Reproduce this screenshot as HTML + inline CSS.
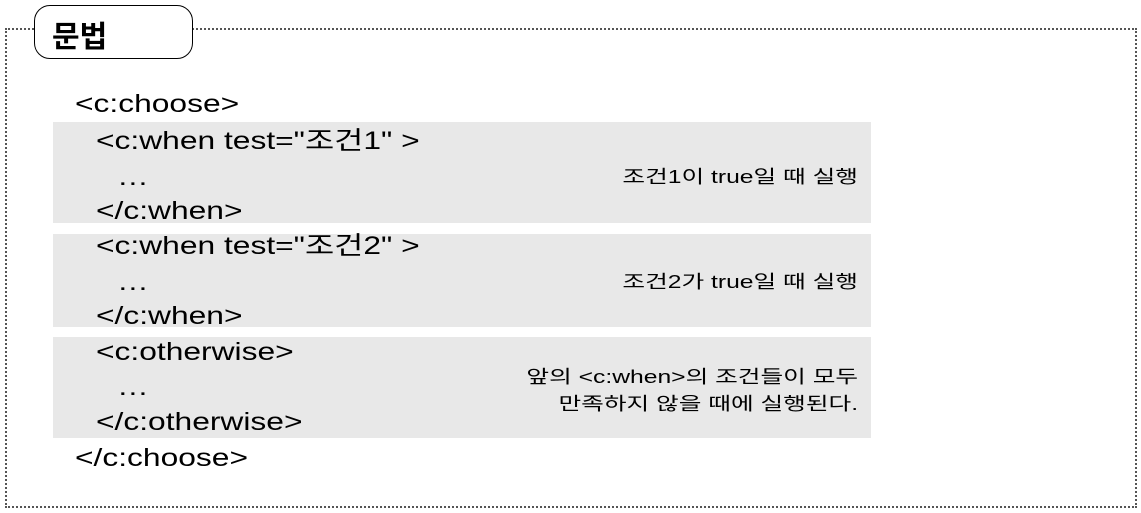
<!DOCTYPE html>
<html><head><meta charset="utf-8"><style>
body{margin:0;width:1141px;height:513px;background:#fff;position:relative;overflow:hidden;font-family:"Liberation Sans","Noto Sans CJK KR",sans-serif;color:#000}
.frame{position:absolute;left:5px;top:28px;width:1128px;height:476px;border:2px dotted #555}
.title{position:absolute;left:34px;top:5px;width:157px;height:52px;border:1.5px solid #000;border-radius:16px;background:#fff}
.title span{position:absolute;left:17px;top:6px;font-size:30px;font-weight:bold;font-family:"Noto Sans CJK KR",sans-serif}
.g{position:absolute;left:53px;width:818px;background:#e8e8e8}
.t{position:absolute;font-size:25px;line-height:28px;white-space:nowrap;transform:scaleX(1.27);transform-origin:0 0}
.n{position:absolute;right:283px;font-size:18px;line-height:27px;text-align:right;white-space:nowrap;transform:scaleX(1.37);transform-origin:100% 0}
</style></head><body>
<div class="frame"></div>
<div class="title"><span>문법</span></div>
<div class="g" style="top:122px;height:101px"></div>
<div class="g" style="top:234px;height:93px"></div>
<div class="g" style="top:337px;height:101px"></div>
<div class="t" style="left:75px;top:90px">&lt;c:choose&gt;</div>
<div class="t" style="left:96px;top:127px">&lt;c:when test="조건1" &gt;</div>
<div class="t" style="left:117px;top:163px">…</div>
<div class="t" style="left:96px;top:197px">&lt;/c:when&gt;</div>
<div class="t" style="left:96px;top:232px">&lt;c:when test="조건2" &gt;</div>
<div class="t" style="left:117px;top:268px">…</div>
<div class="t" style="left:96px;top:302px">&lt;/c:when&gt;</div>
<div class="t" style="left:96px;top:338px">&lt;c:otherwise&gt;</div>
<div class="t" style="left:117px;top:373px">…</div>
<div class="t" style="left:96px;top:408px">&lt;/c:otherwise&gt;</div>
<div class="t" style="left:75px;top:444px">&lt;/c:choose&gt;</div>
<div class="n" style="top:164px">조건1이 true일 때 실행</div>
<div class="n" style="top:269px">조건2가 true일 때 실행</div>
<div class="n" style="top:364px">앞의 &lt;c:when&gt;의 조건들이 모두<br>만족하지 않을 때에 실행된다.</div>
</body></html>
